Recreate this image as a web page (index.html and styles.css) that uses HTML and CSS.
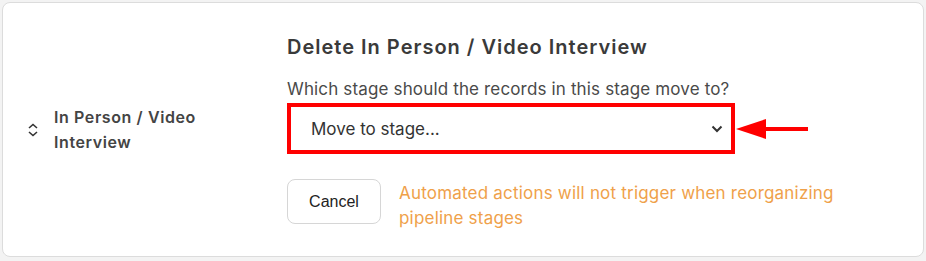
FILE: index.html
```html
<!DOCTYPE html>
<html>

<head>
  <title>Delete stage</title>
  <link rel="stylesheet" href="styles.css">
</head>

<body>
  <main class="card">
    <div class="stage-col">
      <svg class="sort-icon" width="12" height="14" viewBox="0 0 12 14">
        <path d="M2 5 L6 1.5 L10 5 M2 9 L6 12.5 L10 9" fill="none" stroke="#333" stroke-width="1.6" />
      </svg>
      <span class="stage-name">In Person / Video<br>Interview</span>
    </div>

    <div class="delete-form">
      <h2 class="title">Delete In Person / Video Interview</h2>
      <p class="question">Which stage should the records in this stage move to?</p>

      <div class="select-row">
        <div class="highlight">
          <div class="select">
            <span>Move to stage...</span>
            <svg width="12" height="8" viewBox="0 0 12 8">
              <path d="M1.5 1.5 L6 6 L10.5 1.5" fill="none" stroke="#333" stroke-width="2" />
            </svg>
          </div>
        </div>
        <svg class="arrow" width="74" height="22" viewBox="0 0 74 22">
          <polygon points="0,11 30,1 30,21" fill="#f00" />
          <rect x="28" y="9" width="44" height="4" fill="#f00" />
        </svg>
      </div>

      <div class="actions">
        <button class="cancel-btn">Cancel</button>
        <p class="warning">Automated actions will not trigger when reorganizing<br>pipeline stages</p>
      </div>
    </div>
  </main>
</body>

</html>
```

FILE: styles.css
```css
html,
body {
  margin: 0;
  padding: 0;
}

body {
  background-color: #f3f3f3;
  padding: 2px;
  font-family: "Inter", "Liberation Sans", sans-serif;
  color: #333;
}

.card {
  box-sizing: border-box;
  width: 922px;
  height: 255px;
  background-color: white;
  border: 1px solid #dcdcdc;
  border-radius: 0.5rem;
  display: flex;
  align-items: center;
}

.stage-col {
  width: 284px;
  padding-left: 24px;
  box-sizing: border-box;
  display: flex;
  align-items: center;
  gap: 15px;
  flex-shrink: 0;
}

.sort-icon {
  flex-shrink: 0;
}

.stage-name {
  font-size: 16px;
  font-weight: 600;
  line-height: 25px;
  letter-spacing: 0.6px;
  color: #444;
}

.delete-form {
  display: flex;
  flex-direction: column;
  padding-top: 6px;
}

.title {
  margin: 0;
  font-size: 20px;
  font-weight: 600;
  color: #3a3a3a;
  line-height: 26px;
  letter-spacing: 1px;
}

.question {
  margin: 0;
  margin-top: 18px;
  font-size: 17px;
  line-height: 22px;
  letter-spacing: 0.15px;
  color: #4a4a4a;
}

.select-row {
  display: flex;
  align-items: center;
  margin-top: 3px;
}

.highlight {
  border: 4px solid #f00;
  width: 440px;
  height: 43px;
}

.select {
  height: 100%;
  display: flex;
  align-items: center;
  justify-content: space-between;
  padding-left: 20px;
  padding-right: 8px;
  font-size: 17px;
  color: #333;
}

.arrow {
  margin-left: 1px;
}

.actions {
  display: flex;
  align-items: flex-start;
  gap: 18px;
  margin-top: 25px;
}

.cancel-btn {
  width: 94px;
  height: 45px;
  background-color: white;
  border: 1px solid #d6d6d6;
  border-radius: 0.5rem;
  font-family: "Liberation Sans", Arial, sans-serif;
  font-size: 16px;
  color: #222;
  cursor: pointer;
}

.warning {
  margin: 0;
  padding-top: 2px;
  font-size: 17px;
  line-height: 25px;
  letter-spacing: 0.2px;
  color: #efa14a;
}
```
